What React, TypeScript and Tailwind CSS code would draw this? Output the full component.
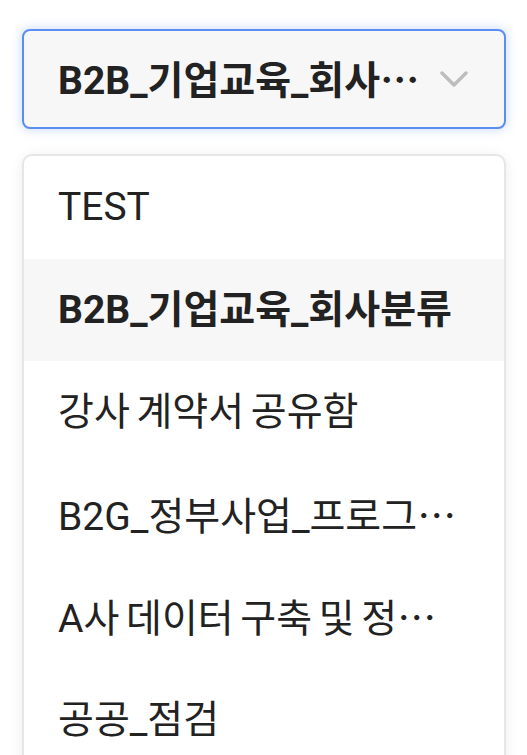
import React from "react";

const FONT = 'Roboto, "Noto Sans CJK KR", sans-serif';

const items: { text: string; more?: boolean; active?: boolean }[] = [
  { text: "TEST" },
  { text: "B2B_기업교육_회사분류", active: true },
  { text: "강사 계약서 공유함" },
  { text: "B2G_정부사업_프로그", more: true },
  { text: "A사 데이터 구축 및 정", more: true },
  { text: "공공_점검" },
];

function Ellipsis() {
  return <span style={{ fontFamily: '"Noto Sans CJK KR", sans-serif' }}>…</span>;
}

export default function App() {
  return (
    <div
      className="w-[527px] h-[755px] overflow-hidden bg-white px-[22px] pt-[29px] text-[#222222]"
      style={{ fontFamily: FONT }}
    >
      <div className="flex h-[100px] w-[484px] items-center rounded-[8px] border-2 border-[#5b8ef0] bg-[#f7f7f7] pl-[34px] pr-[36px] shadow-[0_0_10px_2px_rgba(91,142,240,0.25)]">
        <span className="min-w-0 flex-1 whitespace-nowrap text-left text-[39px] font-bold leading-[44px]">
          B2B_기업교육_회사
          <Ellipsis />
        </span>
        <svg
          width="28"
          height="18"
          viewBox="0 0 28 18"
          className="ml-[24px] shrink-0"
          fill="none"
          stroke="#bdbdbd"
          strokeWidth="3.5"
          strokeLinecap="round"
          strokeLinejoin="round"
        >
          <path d="M2 3l12 12 12-12" />
        </svg>
      </div>

      <div className="mt-[25px] w-[484px] overflow-hidden rounded-[10px] border-2 border-[#e6e6e6] bg-white shadow-[0_2px_14px_rgba(0,0,0,0.08)]">
        {items.map((it) => (
          <div
            key={it.text}
            className={`flex h-[102.5px] items-center pl-[34px] pr-[40px] ${
              it.active ? "bg-[#f7f7f7] font-bold" : "font-normal"
            }`}
          >
            <span className="whitespace-nowrap text-[39px] leading-[44px] [word-spacing:-3px]">
              {it.text}
              {it.more ? <Ellipsis /> : null}
            </span>
          </div>
        ))}
      </div>
    </div>
  );
}
